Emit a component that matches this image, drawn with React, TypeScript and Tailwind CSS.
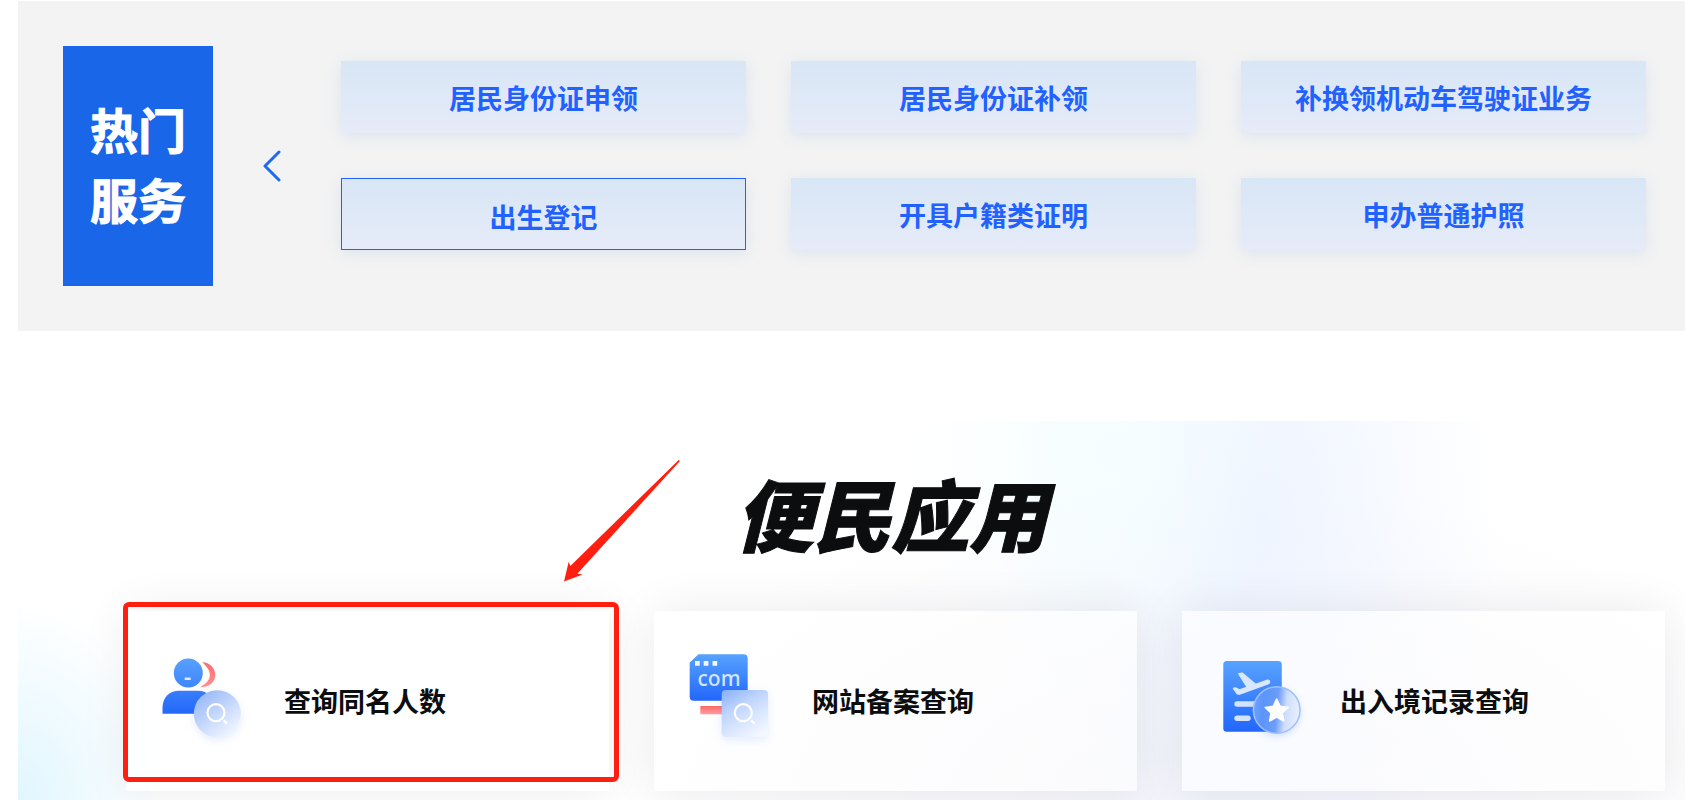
import type { ReactNode } from "react";

const services = [
  { label: "居民身份证申领" },
  { label: "居民身份证补领" },
  { label: "补换领机动车驾驶证业务" },
  { label: "出生登记", active: true },
  { label: "开具户籍类证明" },
  { label: "申办普通护照" },
];

function PeopleIcon() {
  return (
    <svg viewBox="0 0 96 96" className="size-24 shrink-0 overflow-visible" aria-hidden="true">
      <defs>
        <linearGradient id="pe-head" x1="0" y1="0" x2="0" y2="1">
          <stop offset="0" stopColor="#58a0fe" />
          <stop offset="1" stopColor="#3f86fd" />
        </linearGradient>
        <linearGradient id="pe-body" x1="0" y1="0" x2="0" y2="1">
          <stop offset="0" stopColor="#397efb" />
          <stop offset="1" stopColor="#2268fa" />
        </linearGradient>
        <linearGradient id="pe-red" x1="0" y1="0" x2="0" y2="1">
          <stop offset="0" stopColor="#ff6b6b" />
          <stop offset="1" stopColor="#ff9090" />
        </linearGradient>
        <linearGradient id="pe-glass" x1="0.15" y1="0.15" x2="0.75" y2="0.95">
          <stop offset="0" stopColor="#9dbcf9" />
          <stop offset="0.3" stopColor="#b6cdfa" />
          <stop offset="0.65" stopColor="#d3e1fd" />
          <stop offset="1" stopColor="#eef4ff" />
        </linearGradient>
      </defs>
      <path d="M44.3 9C51.5 9.6 57.3 15 57.3 22S51 34.6 42 34.3C47.5 31 51.8 27.5 51.8 22S48.500 13.500 44.300 9Z" fill="url(#pe-red)" />
      <circle cx="30.300" cy="20" r="14.500" fill="url(#pe-head)" />
      <rect x="26.700" y="24.500" width="6" height="2.500" fill="#dfeaff" />
      <path d="M4.500 60.700V55C4.500 44.500 11 37.700 21 37.700H40C50 37.700 56 44.500 56 55V60.700Z" fill="url(#pe-body)" />
      <circle cx="59.300" cy="60.700" r="23.500" fill="url(#pe-glass)" className="drop-shadow-[0_3px_4px_rgba(60,120,250,0.14)]" />
      <circle cx="58" cy="59.700" r="8.500" fill="none" stroke="#fff" strokeWidth="2.200" />
      <path d="M65.700 67.300L69 70.700" stroke="#fff" strokeWidth="2.400" />
    </svg>
  );
}

function SiteIcon() {
  return (
    <svg viewBox="0 0 96 96" className="size-24 shrink-0 overflow-visible" aria-hidden="true">
      <defs>
        <linearGradient id="si-box" x1="0" y1="0" x2="0" y2="1">
          <stop offset="0" stopColor="#58a2ff" />
          <stop offset="1" stopColor="#2267fb" />
        </linearGradient>
        <linearGradient id="si-red" x1="0" y1="0" x2="0" y2="1">
          <stop offset="0" stopColor="#ff6868" />
          <stop offset="1" stopColor="#ffa0a0" />
        </linearGradient>
        <linearGradient id="si-glass" x1="0.15" y1="0" x2="0.75" y2="1">
          <stop offset="0" stopColor="#8fb4fc" />
          <stop offset="0.35" stopColor="#bfd4fc" />
          <stop offset="0.7" stopColor="#dce8ff" />
          <stop offset="1" stopColor="#f3f7ff" />
        </linearGradient>
      </defs>
      <path d="M12.500 1.300H57.700Q61.700 1.300 61.700 5.300V43.700Q61.700 47.700 57.700 47.700H7.700Q3.700 47.700 3.700 43.700V9.500Z" fill="url(#si-box)" />
      <path d="M9 8h4.700v4.700H9zM17.700 8h4.700v4.700h-4.700zM26.500 8h4.700v4.700h-4.700z" fill="#f2f7ff" />
      <text x="33" y="33" textAnchor="middle" className="font-['Noto_Sans',sans-serif] text-[21px] font-medium" fill="#d5e4ff">com</text>
      <rect x="14.300" y="53" width="26" height="8.300" fill="url(#si-red)" />
      <rect x="35.700" y="37" width="46.300" height="46.700" rx="4" fill="url(#si-glass)" className="drop-shadow-[0_3px_4px_rgba(60,120,250,0.14)]" />
      <circle cx="57.300" cy="59.700" r="8.500" fill="none" stroke="#fff" strokeWidth="2.200" />
      <path d="M65 67.300L68.500 70.700" stroke="#fff" strokeWidth="2.400" />
    </svg>
  );
}

function TravelIcon() {
  return (
    <svg viewBox="0 0 96 96" className="size-24 shrink-0 overflow-visible" aria-hidden="true">
      <defs>
        <linearGradient id="tr-doc" x1="0" y1="0" x2="0" y2="1">
          <stop offset="0" stopColor="#58a2ff" />
          <stop offset="1" stopColor="#2267fb" />
        </linearGradient>
        <linearGradient id="tr-glass" x1="0" y1="0.450" x2="1" y2="0.550">
          <stop offset="0" stopColor="#6fa2fc" />
          <stop offset="0.2" stopColor="#5b94fb" />
          <stop offset="0.5" stopColor="#6b9dfb" />
          <stop offset="0.7" stopColor="#cfdefc" />
          <stop offset="1" stopColor="#eaf1ff" />
        </linearGradient>
      </defs>
      <rect x="9.300" y="8" width="58.500" height="70.700" rx="3.500" fill="url(#tr-doc)" />
      <path
        d="M25 20.800L28 20.300L41.700 31.700L53.500 27.300Q55.500 27.200 55.300 29.500L54.500 30.500L25.500 41L23.500 40.700L19.700 35.500L21.700 35.200L25.500 37L33.500 34.300Z"
        fill="#d9e7ff"
        stroke="#d9e7ff"
        strokeWidth="1.800"
        strokeLinejoin="round"
      />
      <rect x="20.300" y="48.300" width="30" height="5.400" rx="2.700" fill="#d5e3ff" />
      <rect x="20.300" y="62.500" width="16.400" height="5.400" rx="2.700" fill="#d5e3ff" />
      <circle cx="62.700" cy="57" r="23.300" fill="url(#tr-glass)" stroke="#9dc1ff" strokeWidth="1.500" className="drop-shadow-[0_3px_3px_rgba(60,120,250,0.18)]" />
      <path
        d="M62.700 46L66.200 53.300L74.200 54.400L68.400 60L69.800 68L62.700 64.200L55.600 68L57 60L51.200 54.400L59.200 53.300Z"
        fill="#fff"
        stroke="#fff"
        strokeWidth="1.500"
        strokeLinejoin="round"
      />
    </svg>
  );
}

function AppCard({ icon, label, children }: { icon: ReactNode; label: string; children?: ReactNode }) {
  return (
    <li className="relative">
      <a
        href="#"
        className="flex h-[180px] items-center gap-[30px] bg-white/60 pl-8 shadow-[0_0_45px_rgba(0,0,0,0.08)]"
      >
        {icon}
        <span className="text-[27px] leading-10 font-bold text-[#0b0d0f]">{label}</span>
      </a>
      {children}
    </li>
  );
}

export default function App() {
  return (
    <div className="flex min-h-screen flex-col overflow-hidden bg-white pt-px pl-[18px] font-['Noto_Sans_CJK_SC',sans-serif]">
      <section className="flex items-start bg-[#f3f3f3] py-[45px] pr-[39px] pl-[45px]">
        <h2 className="flex h-[240px] w-[150px] shrink-0 items-center justify-center bg-[#1966e8] px-6 pb-1.5 text-center text-5xl leading-[70px] font-bold text-white [-webkit-text-stroke:1px_#fff]">
          热门服务
        </h2>
        <button type="button" aria-label="上一页" className="flex h-[240px] w-32 shrink-0 items-center justify-center pr-2.5">
          <svg viewBox="0 0 18 32" className="h-8 w-[18px]" fill="none" stroke="#1f6bee" strokeWidth="3" strokeLinecap="round" strokeLinejoin="round" aria-hidden="true">
            <path d="M16 2L2 16L16 30" />
          </svg>
        </button>
        <ul className="grid flex-1 grid-cols-3 gap-[45px] pt-[15px]">
          {services.map((s) => (
            <li key={s.label}>
              <a
                href="#"
                className={
                  "flex h-[72px] items-center justify-center bg-linear-to-b from-[#d8e6f6] to-[#e6ebf8] text-[27px] leading-10 font-bold text-[#2161ff] shadow-[0_3px_15px_rgba(60,120,200,0.12)] " +
                  (s.active ? "border border-[#2161ff] pt-1.5" : "pt-0.5")
                }
              >
                {s.label}
              </a>
            </li>
          ))}
        </ul>
      </section>

      <section className="mt-[90px] flex-1 bg-[radial-gradient(ellipse_150px_200px_at_0%_100%,#e0f6ff,transparent),radial-gradient(ellipse_190px_220px_at_1090px_30px,#f5feff,transparent),radial-gradient(ellipse_250px_420px_at_1230px_90px,#edf3ff,transparent),radial-gradient(ellipse_620px_320px_at_1200px_100%,#f3f3fa,transparent)] pt-[52px] pr-5 pb-[9px] pl-[108px]">
        <h2 className="pr-[9px] text-center text-[78px] leading-[78px] font-black text-[#0b0d0f] italic [-webkit-text-stroke:1px_#0b0d0f]">便民应用</h2>
        <ul className="mt-[60px] grid grid-cols-3 gap-[45px]">
          <AppCard icon={<PeopleIcon />} label="查询同名人数">
            <div className="pointer-events-none absolute -top-[9px] -right-[10px] bottom-[9px] -left-[3px] rounded-md border-5 border-[#ff1f10]" />
            <svg viewBox="0 0 116 122" className="pointer-events-none absolute -top-[151px] -right-[71px] h-[122px] w-[116px]" aria-hidden="true">
              <path d="M0 121.500L4.700 101.700L6.300 106L114.700 0L116 1L13.300 113.700L18.700 114.500Z" fill="#ff1f10" />
            </svg>
          </AppCard>
          <AppCard icon={<SiteIcon />} label="网站备案查询" />
          <AppCard icon={<TravelIcon />} label="出入境记录查询" />
        </ul>
      </section>
    </div>
  );
}
